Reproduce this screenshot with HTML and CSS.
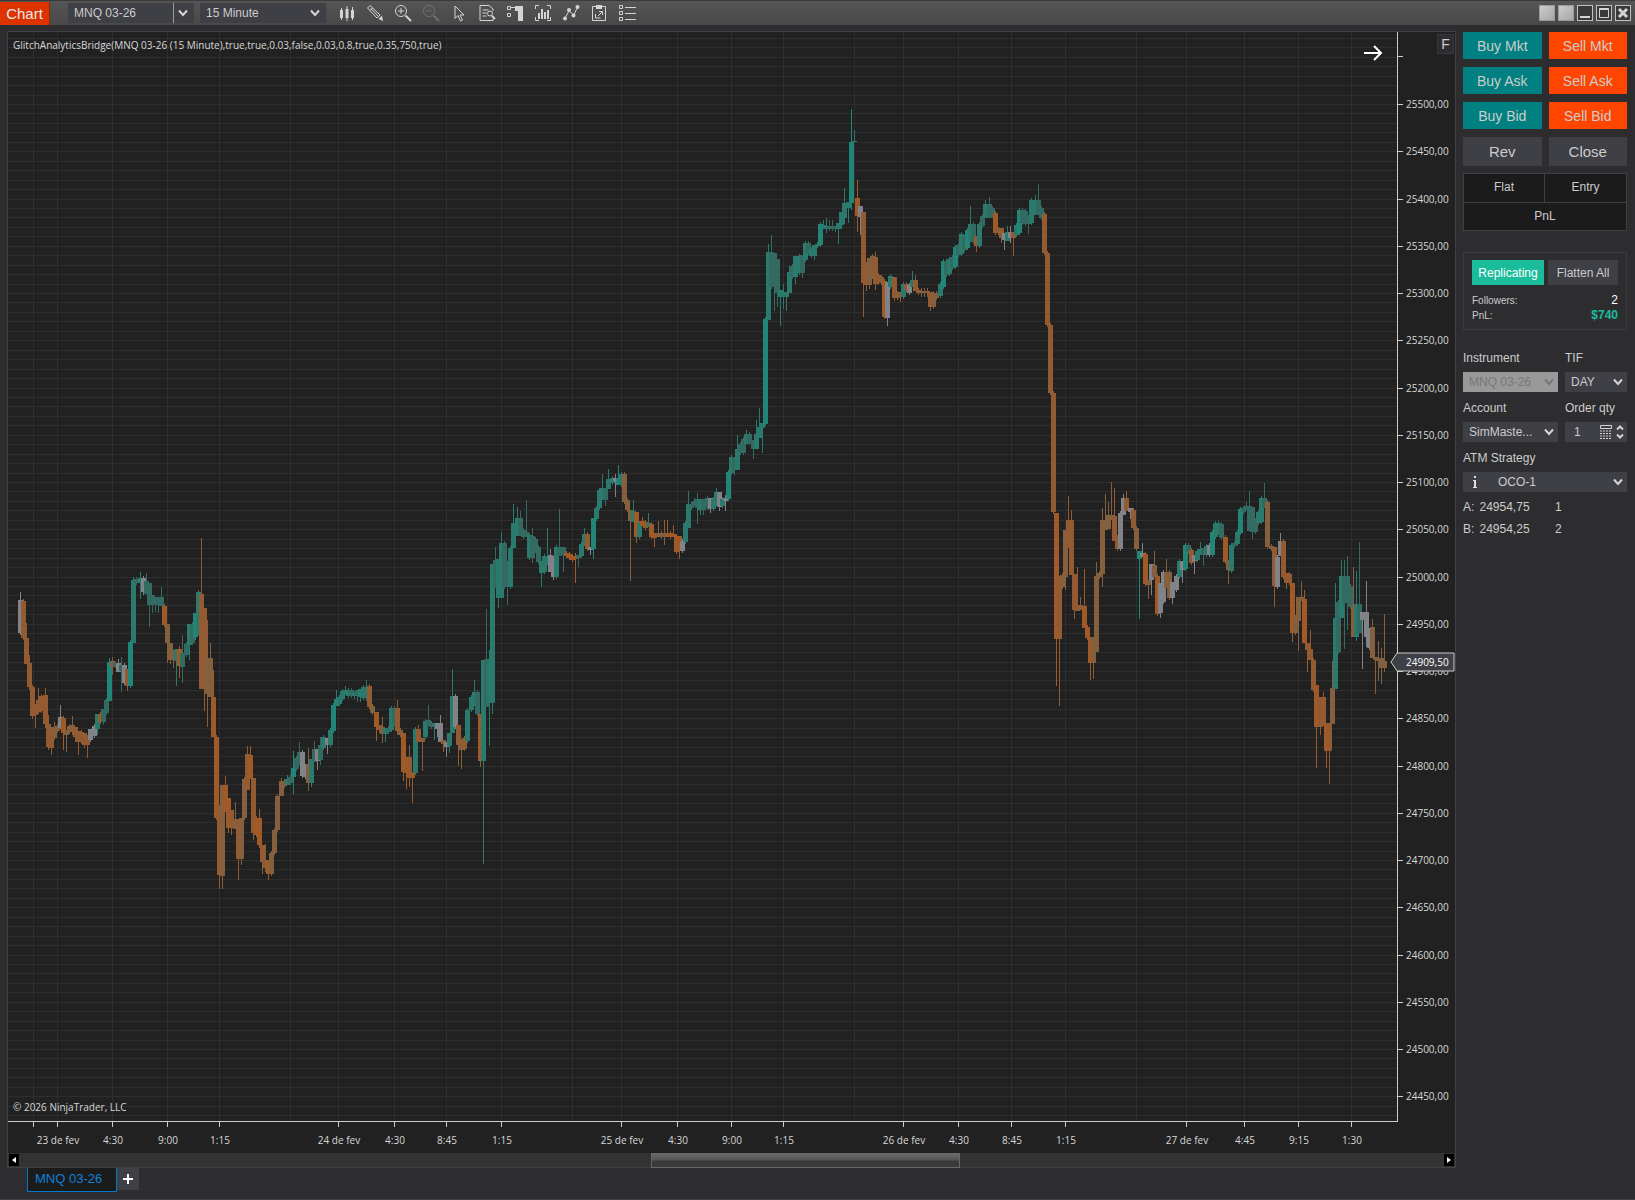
FILE: index.html
```html
<!DOCTYPE html>
<html lang="en">
<head>
    <meta charset="UTF-8">
    <meta name="viewport" content="width=device-width, initial-scale=1.0">
    <title>Chart - MNQ 03-26</title>
    <link rel="stylesheet" href="styles.css">
</head>
<body>
    <header class="titlebar">
        <h1 class="app-name">Chart</h1>
        <div class="select instrument-picker">
            <select aria-label="Chart instrument"><option>MNQ 03-26</option></select>
            <svg class="chevron" viewBox="0 0 10 8"><path d="M1 1.5L5 6L9 1.5"/></svg>
        </div>
        <div class="select interval-picker">
            <select aria-label="Interval"><option>15 Minute</option></select>
            <svg class="chevron" viewBox="0 0 10 8"><path d="M1 1.5L5 6L9 1.5"/></svg>
        </div>
        <nav class="tools">
            <button aria-label="Bar style"><svg viewBox="0 0 18 18"><path class="fill" d="M2 6h3v8H2zM7.500 5h3v9h-3zM13 6h3v8h-3z"/><path d="M3.500 4v12M9 2v15M14.500 3v13"/></svg></button>
            <button aria-label="Drawing tools"><svg viewBox="0 0 18 18"><path d="M1.500 4L4 1.500l10 9.500-3 3zM4 6.500L6.500 4M5 4.500l7.500 8"/><path class="fill" d="M12.500 15L16 11.500 17 17z"/></svg></button>
            <button aria-label="Zoom in"><svg viewBox="0 0 18 18"><circle cx="7" cy="7" r="5.500"/><path d="M4 7h6M7 4v6"/><path class="thick" d="M11.500 11.500L17 17"/></svg></button>
            <button aria-label="Zoom out" disabled><svg viewBox="0 0 18 18"><circle cx="7" cy="7" r="5.500"/><path d="M4 7h6"/><path class="thick" d="M11.500 11.500L17 17"/></svg></button>
            <button aria-label="Cursor"><svg viewBox="0 0 18 18"><path d="M5 2v12.500l3-3 2.500 5.500 2-1-2.500-5h4z"/></svg></button>
            <button aria-label="Data box"><svg viewBox="0 0 18 18"><path d="M15 7V5l-4-3.500H2v15h13V15M4.500 6h6M4.500 9h4M4.500 12h4"/><circle cx="12" cy="9.500" r="2.500"/><path class="thick" d="M14 12l3 3"/></svg></button>
            <button aria-label="Chart trader"><svg viewBox="0 0 18 18"><path d="M1.500 2.500h3v3h-3zM1.500 9.500h3v3h-3zM5 3.500h7"/><path class="fill" d="M9 2h8v15h-5V7H9z"/></svg></button>
            <button aria-label="Indicators"><svg viewBox="0 0 18 18"><path d="M5 1.500H1.500V5M13 1.500h3.500V5M5 16.500H1.500V13M13 16.500h3.500V13"/><path class="thick" d="M5 9v6M8 5v10M11 8v7M14 6v9"/></svg></button>
            <button aria-label="Strategies"><svg viewBox="0 0 18 18"><path d="M3 14l4-7 5 4 3-7"/><circle class="fill" cx="3" cy="14.500" r="2"/><circle class="fill" cx="7" cy="6" r="2"/><circle class="fill" cx="11.500" cy="11.500" r="2"/><circle class="fill" cx="15.500" cy="3" r="2"/></svg></button>
            <button aria-label="Templates"><svg viewBox="0 0 18 18"><path d="M2.500 2.500h13v14h-13z"/><path class="fill" d="M6 1h6v4H6z"/><path d="M9 7.500h3.500V11M12.500 7.500L8 12M5.500 10v4h5"/></svg></button>
            <button aria-label="Properties"><svg viewBox="0 0 18 18"><path d="M1.500 1.500h3v3h-3zM1.500 7.500h3v3h-3zM1.500 13.500h3v3h-3zM7 3.500h11M7 9.500h11M7 15.500h11"/></svg></button>
        </nav>
        <div class="window-buttons">
            <button class="blank" aria-label="Link instrument"></button>
            <button class="blank" aria-label="Link interval"></button>
            <button aria-label="Minimize"><svg viewBox="0 0 14 14"><path class="thick" d="M2 11h10"/></svg></button>
            <button aria-label="Maximize"><svg viewBox="0 0 14 14"><path d="M2.500 3.500h9v8h-9zM2 2.500h10"/></svg></button>
            <button aria-label="Close window"><svg viewBox="0 0 14 14"><path class="cross" d="M3 3l8 8M11 3l-8 8"/></svg></button>
        </div>
    </header>

    <div class="workspace">
        <main class="chart-column">
            <section class="chart-panel">
                <div class="chart-area">
                    <svg id="chart" class="chart"></svg>
                    <p class="indicator-label">GlitchAnalyticsBridge(MNQ 03-26 (15 Minute),true,true,0.03,false,0.03,0.8,true,0.35,750,true)</p>
                    <button class="go-latest" aria-label="Go to latest bar"><svg viewBox="0 0 20 18"><path d="M1 9h17M11 2l7 7-7 7"/></svg></button>
                    <button class="fixed-scale">F</button>
                    <p class="copyright">© 2026 NinjaTrader, LLC</p>
                </div>
                <div class="scrollbar">
                    <button class="scroll-arrow" aria-label="Scroll left"><svg viewBox="0 0 10 12"><path d="M7 3v6L3 6z"/></svg></button>
                    <div class="scroll-track"><div class="scroll-thumb"></div></div>
                    <button class="scroll-arrow" aria-label="Scroll right"><svg viewBox="0 0 10 12"><path d="M3 3v6l4-3z"/></svg></button>
                </div>
            </section>
            <div class="tabs">
                <a class="tab" href="#chart">MNQ 03-26</a>
                <button class="add-tab" aria-label="Add tab"><svg viewBox="0 0 12 12"><path d="M6 1v10M1 6h10"/></svg></button>
            </div>
        </main>

        <aside class="trader">
            <div class="orders">
                <button class="buy">Buy Mkt</button>
                <button class="sell">Sell Mkt</button>
                <button class="buy">Buy Ask</button>
                <button class="sell">Sell Ask</button>
                <button class="buy">Buy Bid</button>
                <button class="sell">Sell Bid</button>
                <button class="neutral">Rev</button>
                <button class="neutral">Close</button>
            </div>
            <div class="position">
                <span>Flat</span>
                <span>Entry</span>
                <span class="pnl">PnL</span>
            </div>
            <section class="replicator">
                <div class="replicator-buttons">
                    <button class="replicating">Replicating</button>
                    <button class="flatten">Flatten All</button>
                </div>
                <div class="stat"><span>Followers:</span><strong>2</strong></div>
                <div class="stat profit"><span>PnL:</span><strong>$740</strong></div>
            </section>
            <form class="settings">
                <div class="field">
                    <label for="instrument">Instrument</label>
                    <div class="select disabled">
                        <select id="instrument" disabled><option>MNQ 03-26</option></select>
                        <svg class="chevron" viewBox="0 0 10 8"><path d="M1 1.5L5 6L9 1.5"/></svg>
                    </div>
                </div>
                <div class="field">
                    <label for="tif">TIF</label>
                    <div class="select">
                        <select id="tif"><option>DAY</option></select>
                        <svg class="chevron" viewBox="0 0 10 8"><path d="M1 1.5L5 6L9 1.5"/></svg>
                    </div>
                </div>
                <div class="field">
                    <label for="account">Account</label>
                    <div class="select">
                        <select id="account"><option>SimMaste...</option></select>
                        <svg class="chevron" viewBox="0 0 10 8"><path d="M1 1.5L5 6L9 1.5"/></svg>
                    </div>
                </div>
                <div class="field">
                    <label for="qty">Order qty</label>
                    <div class="quantity">
                        <input id="qty" type="text" value="1">
                        <svg class="calculator" viewBox="0 0 12 14"><path d="M.5.5h11v3H.5z"/><path class="keys" d="M0 6h12M0 8.500h12M0 11h12M0 13.500h12"/></svg>
                        <svg class="spinner" viewBox="0 0 8 14"><path d="M1 4.500L4 1.500l3 3M1 9.500l3 3 3-3"/></svg>
                    </div>
                </div>
                <div class="field wide">
                    <label for="atm">ATM Strategy</label>
                    <div class="select atm">
                        <svg class="info" viewBox="0 0 6 12"><path d="M2 0h2v2H2zM1 4h3v7h1v1H1v-1h1V5H1z"/></svg>
                        <select id="atm"><option>OCO-1</option></select>
                        <svg class="chevron" viewBox="0 0 10 8"><path d="M1 1.5L5 6L9 1.5"/></svg>
                    </div>
                </div>
            </form>
            <table class="quotes">
                <tr><th>A:</th><td>24954,75</td><td>1</td></tr>
                <tr><th>B:</th><td>24954,25</td><td>2</td></tr>
            </table>
        </aside>
    </div>
    <script src="chart.js"></script>
</body>
</html>
```
FILE: styles.css
```css
* {
    box-sizing: border-box;
}

body {
    margin: 0;
    min-height: 100vh;
    display: flex;
    flex-direction: column;
    background-color: #2d2d30;
    color: #cccccc;
    font-family: "Liberation Sans", Arial, sans-serif;
    font-size: 12px;
    border-bottom: 1px solid #3f3f46;
}

button,
select,
input {
    font: inherit;
    color: inherit;
    border: 0;
    border-radius: 0;
    padding: 0;
    margin: 0;
}

p {
    margin: 0;
}

svg {
    fill: none;
    stroke: #d4d4d4;
}

/* Title bar */
.titlebar {
    height: 25px;
    display: flex;
    align-items: center;
    background: linear-gradient(#555555, #484848);
    border-top: 1px solid #3a3a3a;
    padding-right: 4px;
}

.app-name {
    width: 50px;
    height: 23px;
    margin: 0 18px 0 0;
    background-color: #dd3300;
    border-right: 1px solid #8a2a10;
    color: #e8e8e8;
    font-size: 15px;
    font-weight: normal;
    line-height: 23px;
    text-align: center;
}

.select {
    position: relative;
    height: 20px;
    background-color: #3f3f46;
}

.select select {
    appearance: none;
    width: 100%;
    height: 100%;
    padding: 0 6px;
    background: none;
}

.chevron {
    position: absolute;
    right: 4px;
    top: 6px;
    width: 10px;
    height: 8px;
    stroke-width: 2;
    pointer-events: none;
}

.instrument-picker {
    width: 126px;
    margin-right: 6px;
}

.instrument-picker select {
    border-right: 1px solid #999999;
    width: 106px;
}

.interval-picker {
    width: 126px;
    margin-right: 12px;
}

.interval-picker .chevron,
.instrument-picker .chevron {
    right: 6px;
}

.tools {
    display: flex;
    gap: 10px;
}

.tools button {
    width: 18px;
    height: 18px;
    background: none;
}

.tools button:disabled {
    opacity: 0.25;
}

.tools svg {
    display: block;
}

.fill {
    fill: #d4d4d4;
    stroke: none;
}

.thick {
    stroke-width: 2;
}

.window-buttons {
    margin-left: auto;
    display: flex;
    gap: 3px;
}

.window-buttons button {
    width: 16px;
    height: 16px;
    border: 1px solid #c0c0c0;
    background-color: #3a3a3a;
}

.window-buttons .blank {
    background: linear-gradient(135deg, #cccccc, #a8a6a8);
    border-color: #9a9a9a;
}

.window-buttons svg {
    display: block;
}

.cross {
    stroke-width: 3;
}

/* Chart */
.workspace {
    flex: 1;
    display: flex;
}

.chart-column {
    flex: 1;
    min-width: 0;
    display: flex;
    flex-direction: column;
    padding: 6px 0 7px 7px;
}

.chart-panel {
    flex: 1;
    display: flex;
    flex-direction: column;
    border: 1px solid #3f3f46;
    border-bottom: 0;
    background-color: #212121;
}

.chart-area {
    position: relative;
    flex: 1;
    display: flex;
}

.chart {
    flex: 1;
    width: 100%;
    stroke: none;
    font-family: "Open Sans", "Segoe UI", sans-serif;
    font-size: 10px;
}

.chart .grid {
    stroke: #2e2e2e;
}

.chart .axis {
    stroke: #cccccc;
}

.chart text {
    fill: #d8d8d8;
}

.chart .marker {
    fill: #3f3f46;
    stroke: #cccccc;
}

.chart .marker-text {
    fill: #ffffff;
}

.indicator-label,
.copyright {
    position: absolute;
    left: 5px;
    color: #d8d8d8;
    font-family: "Open Sans", "Segoe UI", sans-serif;
    font-size: 10px;
    line-height: 16px;
}

.indicator-label {
    top: 5px;
}

.copyright {
    bottom: 38px;
}

.go-latest {
    position: absolute;
    top: 12px;
    right: 72px;
    width: 20px;
    height: 18px;
    background: none;
}

.go-latest svg {
    display: block;
    stroke: #ffffff;
    stroke-width: 2;
}

.fixed-scale {
    position: absolute;
    top: 2px;
    right: 1px;
    width: 17px;
    height: 20px;
    background-color: #2d2d30;
    border: 1px solid #38383c;
    font-size: 14px;
}

.scrollbar {
    height: 15px;
    display: flex;
    align-items: center;
    background-color: #333333;
    border-bottom: 1px solid #3f3f46;
}

.scroll-arrow {
    width: 10px;
    height: 12px;
    margin: 0 1px;
    background-color: #000000;
}

.scroll-arrow svg {
    display: block;
    fill: #ffffff;
    stroke: none;
}

.scroll-track {
    flex: 1;
    display: grid;
    grid-template-columns: 631fr 310fr 483fr;
    height: 15px;
}

.scroll-thumb {
    grid-column: 2;
    border: 1px solid #686868;
    background: linear-gradient(#6a6a6a, #555555 45%, #3a3a3a 55%);
}

.tabs {
    display: flex;
    padding-left: 20px;
}

.tab {
    width: 90px;
    height: 24px;
    padding-left: 7px;
    border: 1px solid #007acc;
    border-top: 0;
    background-color: #1b1b1c;
    color: #0e82d8;
    font-size: 13px;
    line-height: 22px;
    text-decoration: none;
}

.add-tab {
    width: 22px;
    height: 22px;
    background-color: #3f3f46;
}

.add-tab svg {
    width: 12px;
    display: block;
    margin: 0 auto;
    stroke: #ffffff;
    stroke-width: 2;
}

/* Chart trader */
.trader {
    width: 179px;
    padding: 7px 8px 0 7px;
}

.orders {
    display: grid;
    grid-template-columns: 1fr 1fr;
    gap: 8px 7px;
}

.orders button {
    height: 27px;
    font-size: 14px;
}

.orders .neutral {
    height: 29px;
    font-size: 15px;
}

.buy {
    background-color: #008080;
}

.sell {
    background-color: #ff4500;
}

.neutral {
    background-color: #3f3f46;
}

.position {
    display: grid;
    grid-template-columns: 1fr 1fr;
    grid-auto-rows: 28px;
    margin-top: 7px;
    border: 1px solid #3f3f46;
    background-color: #1b1b1c;
    line-height: 27px;
    text-align: center;
}

.position .pnl {
    grid-column: span 2;
    border-top: 1px solid #3f3f46;
}

.position span:first-child {
    border-right: 1px solid #3f3f46;
}

.replicator {
    margin-top: 21px;
    padding: 7px 8px 6px;
    border: 1px solid #3a3a3f;
}

.replicator-buttons {
    display: grid;
    grid-template-columns: 72px 1fr;
    gap: 4px;
    margin-bottom: 8px;
}

.replicator-buttons button {
    height: 25px;
    background-color: #3f3f46;
}

.replicator-buttons .replicating {
    background-color: #1abc9c;
    color: #ffffff;
}

.stat {
    display: flex;
    justify-content: space-between;
    font-size: 10px;
    line-height: 15px;
}

.stat strong {
    font-size: 12px;
    font-weight: normal;
    color: #ffffff;
}

.profit strong {
    font-weight: bold;
    color: #1abc9c;
}

.settings {
    display: grid;
    grid-template-columns: 95px 1fr;
    gap: 8px 7px;
    margin-top: 20px;
}

.field label {
    display: block;
    line-height: 16px;
    margin-bottom: 6px;
}

.wide {
    grid-column: span 2;
}

.disabled {
    background-color: #999999;
    color: #777777;
}

.disabled select {
    opacity: 1;
}

.disabled svg {
    stroke: #777777;
}

.quantity {
    display: flex;
    align-items: center;
    height: 20px;
    padding-right: 3px;
    background-color: #3f3f46;
}

.quantity input {
    width: 35px;
    padding-left: 9px;
    background: none;
}

.calculator {
    width: 12px;
    height: 14px;
}

.keys {
    stroke-dasharray: 2 1;
}

.spinner {
    width: 8px;
    height: 14px;
    margin-left: 4px;
    stroke-width: 2;
}

.atm select {
    padding-left: 35px;
}

.info {
    position: absolute;
    left: 9px;
    top: 4px;
    height: 12px;
    fill: #e0e0e0;
    stroke: none;
}

.quotes {
    margin-top: 4px;
    border-spacing: 0;
    line-height: 22px;
}

.quotes th {
    width: 17px;
    padding: 0;
    font-weight: normal;
    text-align: left;
}

.quotes td {
    width: 78px;
    padding: 0;
}
```
FILE: chart.js
```javascript
// Bars from left to right: colour key, body top, body bottom, high, low
const bars = `
g600,633,592,635 o601,638 o638,664,623,664 o663,687,655,690 o687,716,685,719 o704,715,704,728 o700,712,688,714 o696,711 o695,724,688,728 o724,747,715,750
o730,748,727,755 b727,738,722,740 b726,731 g717,728,705,729 O718,733,716,750 b730,735,730,752 b726,732 b725,730,716,735 o727,737,727,742 o731,742,731,755
o732,742 o733,745,733,748 o735,745,735,758 g729,740,729,742 g726,736 t714,729,714,735 O714,722 d709,722,709,725 d700,713 T662,701,658,701
b661,667,657,675 d663,666 g663,672,659,672 d665,671,657,692 g665,683 o669,686,669,691 T642,686 t580,643,577,643 d579,583 t578,583,572,599
g578,592,576,595 d581,594,573,594 d583,605,583,627 d595,605,595,613 d597,605,597,612 d597,605,597,613 d597,606,587,606 O606,625 b624,643,624,663 b643,660,643,664
b650,660,650,668 t649,661,649,686 O649,666,646,678 d653,667,635,683 d644,655 t624,645,624,660 d624,643 T613,637,613,640 t592,633 o594,689,538,689
o608,689,608,711 b658,694,620,727 b658,697,643,697 O697,737,670,737 O737,818 o805,875,805,889 b785,876,785,889 O785,812,776,812 O798,828,798,833 o810,828,810,835
b819,829,802,829 o819,859,819,880 b818,859,818,865 b779,818 o754,790,746,790 O755,779,746,779 o778,833,778,840 O818,835 O818,845,809,848 o845,862,845,874
b860,868,844,872 O860,874,860,880 b853,874 b830,853 b796,830 b781,796,778,796 b781,786 t779,785,775,785 d777,783 T768,777,751,794
d758,769 d752,765,742,765 g752,776 g766,777 b764,783,748,791 t759,783,759,787 d749,762,741,762 g749,761,749,770 d745,760,737,765 t737,748
g738,745,738,754 t730,745 T705,731 T699,706,690,706 t697,704 t691,699 t690,695,686,695 t690,696 d690,696 t692,696,692,699
d690,695,690,702 t689,697,689,702 t687,698 t687,697,680,701 o686,707 b706,713 O712,727,712,741 o725,730,725,733 b727,734,717,743 t728,734,728,742
d728,732 t708,730 d708,724 o708,731,700,735 b730,735 O733,772,733,781 O757,773,757,789 o757,778,745,787 O772,778,772,803 t729,773
o729,742,725,742 b738,742,738,771 t721,737 d720,726,705,726 d723,727 t723,726,723,740 g723,729,723,737 g723,742,715,742 o740,744,740,752 g742,747,742,757
t733,746,733,753 t696,733,669,733 g696,727 o725,745,725,766 b739,750,739,769 o738,749 t710,741 t697,710 t692,706,680,706 d692,714
O714,761,714,767 t660,761,660,864 d659,707,609,707 t660,703,650,746 t564,703,564,714 d560,588,547,588 t559,598,559,608 t543,598,532,598 d543,587 d561,587,561,605
t548,587 t523,548,504,548 t518,536,507,536 d518,536,511,536 d530,537 d532,537,500,537 t535,558 d536,558,528,563 d539,551 d547,562
t561,573,561,587 t556,572 t556,565,528,565 g555,572,549,572 g556,577,556,580 t547,577 d547,556,509,556 d547,555,547,572 O553,556 O554,558
O556,560 O556,559,553,583 d555,558,555,567 t544,556 t534,546,528,546 o534,549 g547,550,547,555 T518,549,518,559 t508,519 t490,508
t488,500,474,500 d488,500,488,506 t479,489,469,489 t478,483 g478,481,474,497 T478,485,465,485 t474,485 b474,502 b500,510 b510,521,510,581
t511,522,500,522 O512,537,512,543 t523,537 O521,526,517,526 O522,528 t523,527,513,527 O524,537 O533,538,533,547 b533,537,521,537 b533,537
b533,537,520,545 O533,536,520,537 O533,537 O534,537,525,537 O536,552 O536,551,536,559 g541,551 t523,542 t504,528,491,528 d504,508
d501,506,498,506 d499,508,493,524 t499,510,499,515 d499,510,499,515 d498,508 g498,509,498,513 t499,509 t492,506,488,506 g492,507,492,511 t499,506
g498,501,495,511 T472,499 t457,473 d457,470,457,475 t449,470,435,470 d444,453 d439,453 t434,444,430,444 d434,443 d440,449,440,459
t434,449,420,449 t427,438,408,438 t423,428,423,453 T319,424 t252,320,244,320 d252,287,235,289 d253,283,253,311 d259,293,259,307 t290,297,290,326 t292,297,284,309
t292,297,292,311 t272,293,266,293 d266,277 t256,277,256,284 t256,273 d255,273,255,278 t243,260 d243,253 t249,256 t245,256,245,260
t244,246 T224,245 t225,229,220,229 t226,229,218,233 d226,229,220,231 d226,229,220,231 d226,229,226,232 t223,229,223,244 t212,225,212,229 t203,218,188,224
t202,208,202,223 T142,203,109,210 t141,142,130,142 O198,216,180,232 g206,217,206,235 o212,283,212,317 o262,285,262,291 b258,285,258,289 b256,277 o257,284,252,290
o275,283 b277,283 O281,317 g282,318,282,326 t276,287 o277,298,277,301 b293,298 o292,297,292,302 t284,297 o284,290
g285,293 t280,287,271,287 o280,291,275,291 o290,293 b291,293,288,297 b291,293,288,297 b291,293,288,297 o292,307,292,311 b293,307 b293,298
t284,296 T261,287 d261,275 t259,274 d257,268 T247,267 d245,255 t234,254 d237,250 T230,248
t224,242,206,242 d224,242 o236,246,236,252 t224,246 d216,226 t204,218,200,218 d204,218,197,218 d208,216 O213,233 b229,233
o228,238,228,243 g233,240,233,250 t232,241,226,241 g232,238,226,243 o232,238,232,256 t225,235 T210,233 d210,223 d211,224 d215,224,215,234
t200,223 t200,215,195,215 d200,215,184,215 d208,218 o214,253 o253,325 o325,393 o393,512 O513,639,513,686 o576,639,576,706
b575,587 b530,577,530,590 o520,548,496,548 o520,575,510,575 o574,610,574,619 o606,611,567,611 b605,610,597,610 O606,628,569,628 O627,638 O637,663,637,680
b637,663,637,679 b576,652,562,652 b573,577 b520,574,508,587 b520,530,494,530 b515,529,502,529 b515,520,482,520 o516,541,488,541 o537,549 g513,549
g498,515,494,515 o498,511,491,511 g508,512,508,519 o510,528 b528,549 T551,559,551,619 g553,557,543,557 O554,584 b580,585,580,599 g564,580,564,595
b565,577,551,577 O576,614 g583,613,583,618 g572,602 b572,588,559,588 b572,598 g582,598,582,604 g576,590 t561,577 g561,570,561,583
T545,569 d545,552 o550,563 g555,561,555,574 t551,560 t549,555,542,555 d548,555,548,566 t546,555 g545,555 T532,555
t523,537 t523,533 d524,538 O537,562 b560,570,560,584 t545,571 d543,546 t532,544 T509,533 d508,512
d506,510,502,510 d506,531,491,531 d507,532,507,539 d520,532 t512,523 t498,522 d498,508,483,508 b502,547 b546,549 o547,586,547,607
g557,587 g541,556,533,556 o541,577 o573,583,573,589 o574,583 O583,633,583,642 b617,633 b597,621,597,651 b597,601,581,601 O599,643,590,643
o643,650,643,672 o649,660,630,660 o660,690 O685,727,685,768 o697,727,697,735 o697,726,692,726 O723,751,723,768 o723,751,723,784 b688,724,661,724 t618,689,583,689
d602,652 t576,618,560,618 d576,603,560,649 d576,593,556,630 d586,607 b605,637,567,637 t604,637,571,641 d604,633,542,633 g612,620,612,669 g612,637,581,647
g630,648 b627,658,619,658 b657,660,657,694 b658,661,641,681 b658,668,648,684 b661,668,614,672
`.trim().split(/\s+/);

const colors = {
    g: '#818388',
    o: '#945a31',
    O: '#a05a28',
    b: '#85603f',
    t: '#2a7a6e',
    T: '#218577',
    d: '#336b63'
};

const times = [
    [57, '23 de fev'], [112, '4:30'], [167, '9:00'], [219, '1:15'],
    [338, '24 de fev'], [394, '4:30'], [446, '8:45'], [501, '1:15'],
    [621, '25 de fev'], [677, '4:30'], [731, '9:00'], [783, '1:15'],
    [903, '26 de fev'], [958, '4:30'], [1011, '8:45'], [1065, '1:15'],
    [1186, '27 de fev'], [1244, '4:45'], [1298, '9:15'], [1351, '1:30']
];
const sessionLines = [33, 290, 572, 854, 1136];

const svg = document.getElementById('chart');

function add(name, attrs, text) {
    const el = document.createElementNS('http://www.w3.org/2000/svg', name);
    for (const key in attrs) el.setAttribute(key, attrs[key]);
    if (text) el.textContent = text;
    svg.appendChild(el);
}

function line(x1, y1, x2, y2, cls) {
    add('line', { x1: x1, y1: y1, x2: x2, y2: y2, class: cls, 'shape-rendering': 'crispEdges' });
}

function rect(x, y, width, height, fill) {
    add('rect', { x: x, y: y, width: width, height: height, fill: fill });
}

function draw() {
    svg.innerHTML = '';
    const box = svg.getBoundingClientRect();
    const right = Math.round(box.width) - 58;
    const bottom = Math.round(box.height) - 32;
    const sx = v => Math.round((v - 8) / 1389 * right);
    const sy = v => Math.round((v - 32) / 1089 * bottom);

    // Grid, one line every 10 points
    for (let price = 24430; price <= 25570; price += 10) {
        const y = sy(104 + (25500 - price) * 0.945) + 0.5;
        line(0, y, right, y, 'grid');
    }
    times.map(t => t[0]).concat(sessionLines).forEach(v => {
        line(sx(v) + 0.5, 0, sx(v) + 0.5, bottom, 'grid');
    });

    // Candles
    bars.forEach((bar, i) => {
        const color = colors[bar[0]];
        const v = bar.slice(1).split(',').map(Number);
        const high = v.length > 2 ? v[2] : v[0] - 2;
        const low = v.length > 2 ? v[3] : v[1] + 2;
        const x = sx(20 + i * 3.065);
        rect(x, sy(high), 1, sy(low) - sy(high), color);
        rect(x - 2, sy(v[0]), 5, Math.max(1, sy(v[1]) - sy(v[0])), color);
    });

    // Axes
    line(right + 0.5, 0, right + 0.5, bottom, 'axis');
    line(0, bottom + 0.5, right + 1, bottom + 0.5, 'axis');
    line(right, sy(56) + 0.5, right + 6, sy(56) + 0.5, 'axis');
    for (let price = 25500; price >= 24450; price -= 50) {
        const y = sy(104 + (25500 - price) * 0.945);
        line(right, y + 0.5, right + 6, y + 0.5, 'axis');
        add('text', { x: right + 9, y: y + 4 }, price + ',00');
    }
    line(sx(33) + 0.5, bottom, sx(33) + 0.5, bottom + 6, 'axis');
    times.forEach(t => {
        line(sx(t[0]) + 0.5, bottom, sx(t[0]) + 0.5, bottom + 6, 'axis');
        add('text', { x: sx(t[0]) + 1, y: bottom + 23, 'text-anchor': 'middle' }, t[1]);
    });

    // Last price
    const y = sy(662);
    add('path', { class: 'marker', d: `M${right - 6} ${y}l6 -9h57v18h-57z` });
    add('text', { class: 'marker-text', x: right + 9, y: y + 4 }, '24909,50');
}

draw();
window.addEventListener('resize', draw);
```
